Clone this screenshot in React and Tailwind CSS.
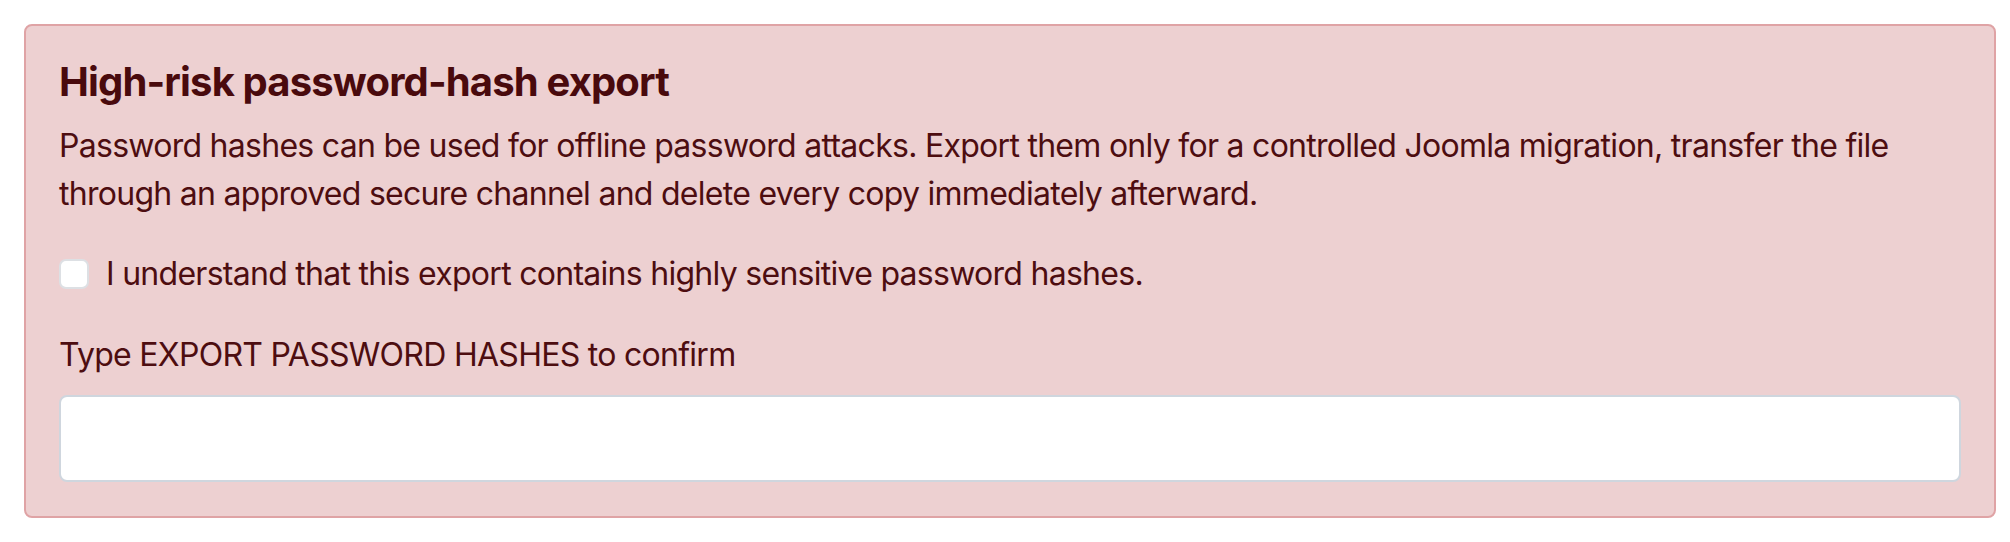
import { useState } from "react";

const ExportWarning = () => {
  const [agreed, setAgreed] = useState(false);
  const [phrase, setPhrase] = useState("");

  return (
    <div className="w-[1972px] rounded-[8px] border-2 border-[#dfa3a5] bg-[#edd0d1] px-[33px] pt-[32px] pb-[34px] text-[#4d0d10]">
      <h4 className="mb-[16px] text-[40px] leading-[48px] font-bold tracking-[-0.85px] text-[#490a0d]">
        High-risk password-hash export
      </h4>
      <p className="text-[32px] leading-[48px] tracking-[-0.72px]">
        Password hashes can be used for offline password attacks. Export them only for a controlled Joomla migration, transfer the file
        <br />
        through an approved secure channel and delete every copy immediately afterward.
      </p>
      <label className="mt-[32px] flex items-center gap-[17px] text-[32px] leading-[48px] tracking-[-0.72px]">
        <input
          type="checkbox"
          checked={agreed}
          onChange={(e) => setAgreed(e.target.checked)}
          className="h-[30px] w-[30px] shrink-0 appearance-none rounded-[7px] border-2 border-[#dde0e4] bg-white"
        />
        I understand that this export contains highly sensitive password hashes.
      </label>
      <div className="mt-[33px] text-[32px] leading-[48px] tracking-[-0.72px]">
        Type EXPORT PASSWORD HASHES to confirm
      </div>
      <input
        type="text"
        value={phrase}
        onChange={(e) => setPhrase(e.target.value)}
        className="mt-[16px] block h-[87px] w-full rounded-[8px] border-2 border-[#cfd6de] bg-white px-[24px] text-[32px] outline-none"
      />
    </div>
  );
};

export default function App() {
  return (
    <div className="min-h-[542px] bg-white pt-[24px] pl-[24px] font-['Inter',sans-serif]">
      <ExportWarning />
    </div>
  );
}
